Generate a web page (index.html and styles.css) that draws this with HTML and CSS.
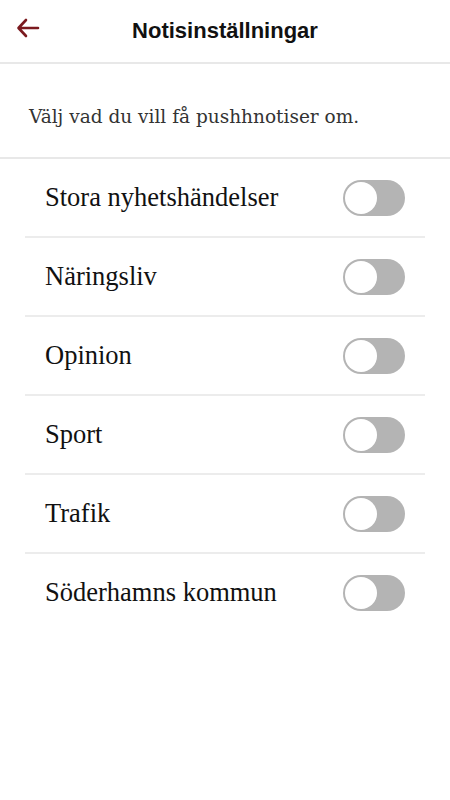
FILE: index.html
```html
<!DOCTYPE html>
<html lang="sv">
<head>
    <meta charset="UTF-8">
    <meta name="viewport" content="width=device-width, initial-scale=1.0">
    <title>Notisinställningar</title>
    <link rel="stylesheet" href="styles.css">
</head>
<body>
    <header class="topbar">
        <button class="back" aria-label="Tillbaka">
            <svg width="24" height="20" viewBox="0 0 24 20">
                <path d="M22 10H3M10 2L2.5 10L10 18" fill="none" stroke="#7b1a1f" stroke-width="2.6" stroke-linecap="round" stroke-linejoin="round"/>
            </svg>
        </button>
        <h1>Notisinställningar</h1>
    </header>

    <p class="intro">Välj vad du vill få pushhnotiser om.</p>

    <ul class="topics">
        <li><span>Stora nyhetshändelser</span><span class="switch"></span></li>
        <li><span>Näringsliv</span><span class="switch"></span></li>
        <li><span>Opinion</span><span class="switch"></span></li>
        <li><span>Sport</span><span class="switch"></span></li>
        <li><span>Trafik</span><span class="switch"></span></li>
        <li><span>Söderhamns kommun</span><span class="switch"></span></li>
    </ul>
</body>
</html>
```

FILE: styles.css
```css
body {
    margin: 0;
    background-color: #fff;
    color: #111;
    font-family: "Liberation Serif", serif;
}

.topbar {
    height: 62px;
    display: flex;
    align-items: center;
    justify-content: center;
    border-bottom: 2px solid #e8e8e8;
    position: relative;
}

.topbar h1 {
    margin: 0;
    font-family: "Liberation Sans", Arial, sans-serif;
    font-size: 22px;
    font-weight: bold;
    color: #111;
}

.back {
    position: absolute;
    left: 16px;
    top: 18px;
    padding: 0;
    border: 0;
    background: none;
}

.intro {
    margin: 0;
    height: 81px;
    padding-top: 12px;
    padding-left: 29px;
    display: flex;
    align-items: center;
    font-family: "DejaVu Serif", serif;
    font-size: 18.5px;
    color: #333;
    border-bottom: 2px solid #e8e8e8;
}

.topics {
    list-style: none;
    margin: 0;
    padding: 0 25px;
}

.topics li {
    height: 77px;
    display: flex;
    align-items: center;
    justify-content: space-between;
    padding: 0 20px;
    font-size: 26.5px;
    border-bottom: 2px solid #ececec;
}

.topics li:last-child {
    border-bottom: 0;
}

.switch {
    width: 62px;
    height: 36px;
    border-radius: 18px;
    background-color: #b4b4b4;
    position: relative;
}

.switch::after {
    content: "";
    position: absolute;
    left: 2px;
    top: 2px;
    width: 32px;
    height: 32px;
    border-radius: 50%;
    background-color: #fff;
}
```
